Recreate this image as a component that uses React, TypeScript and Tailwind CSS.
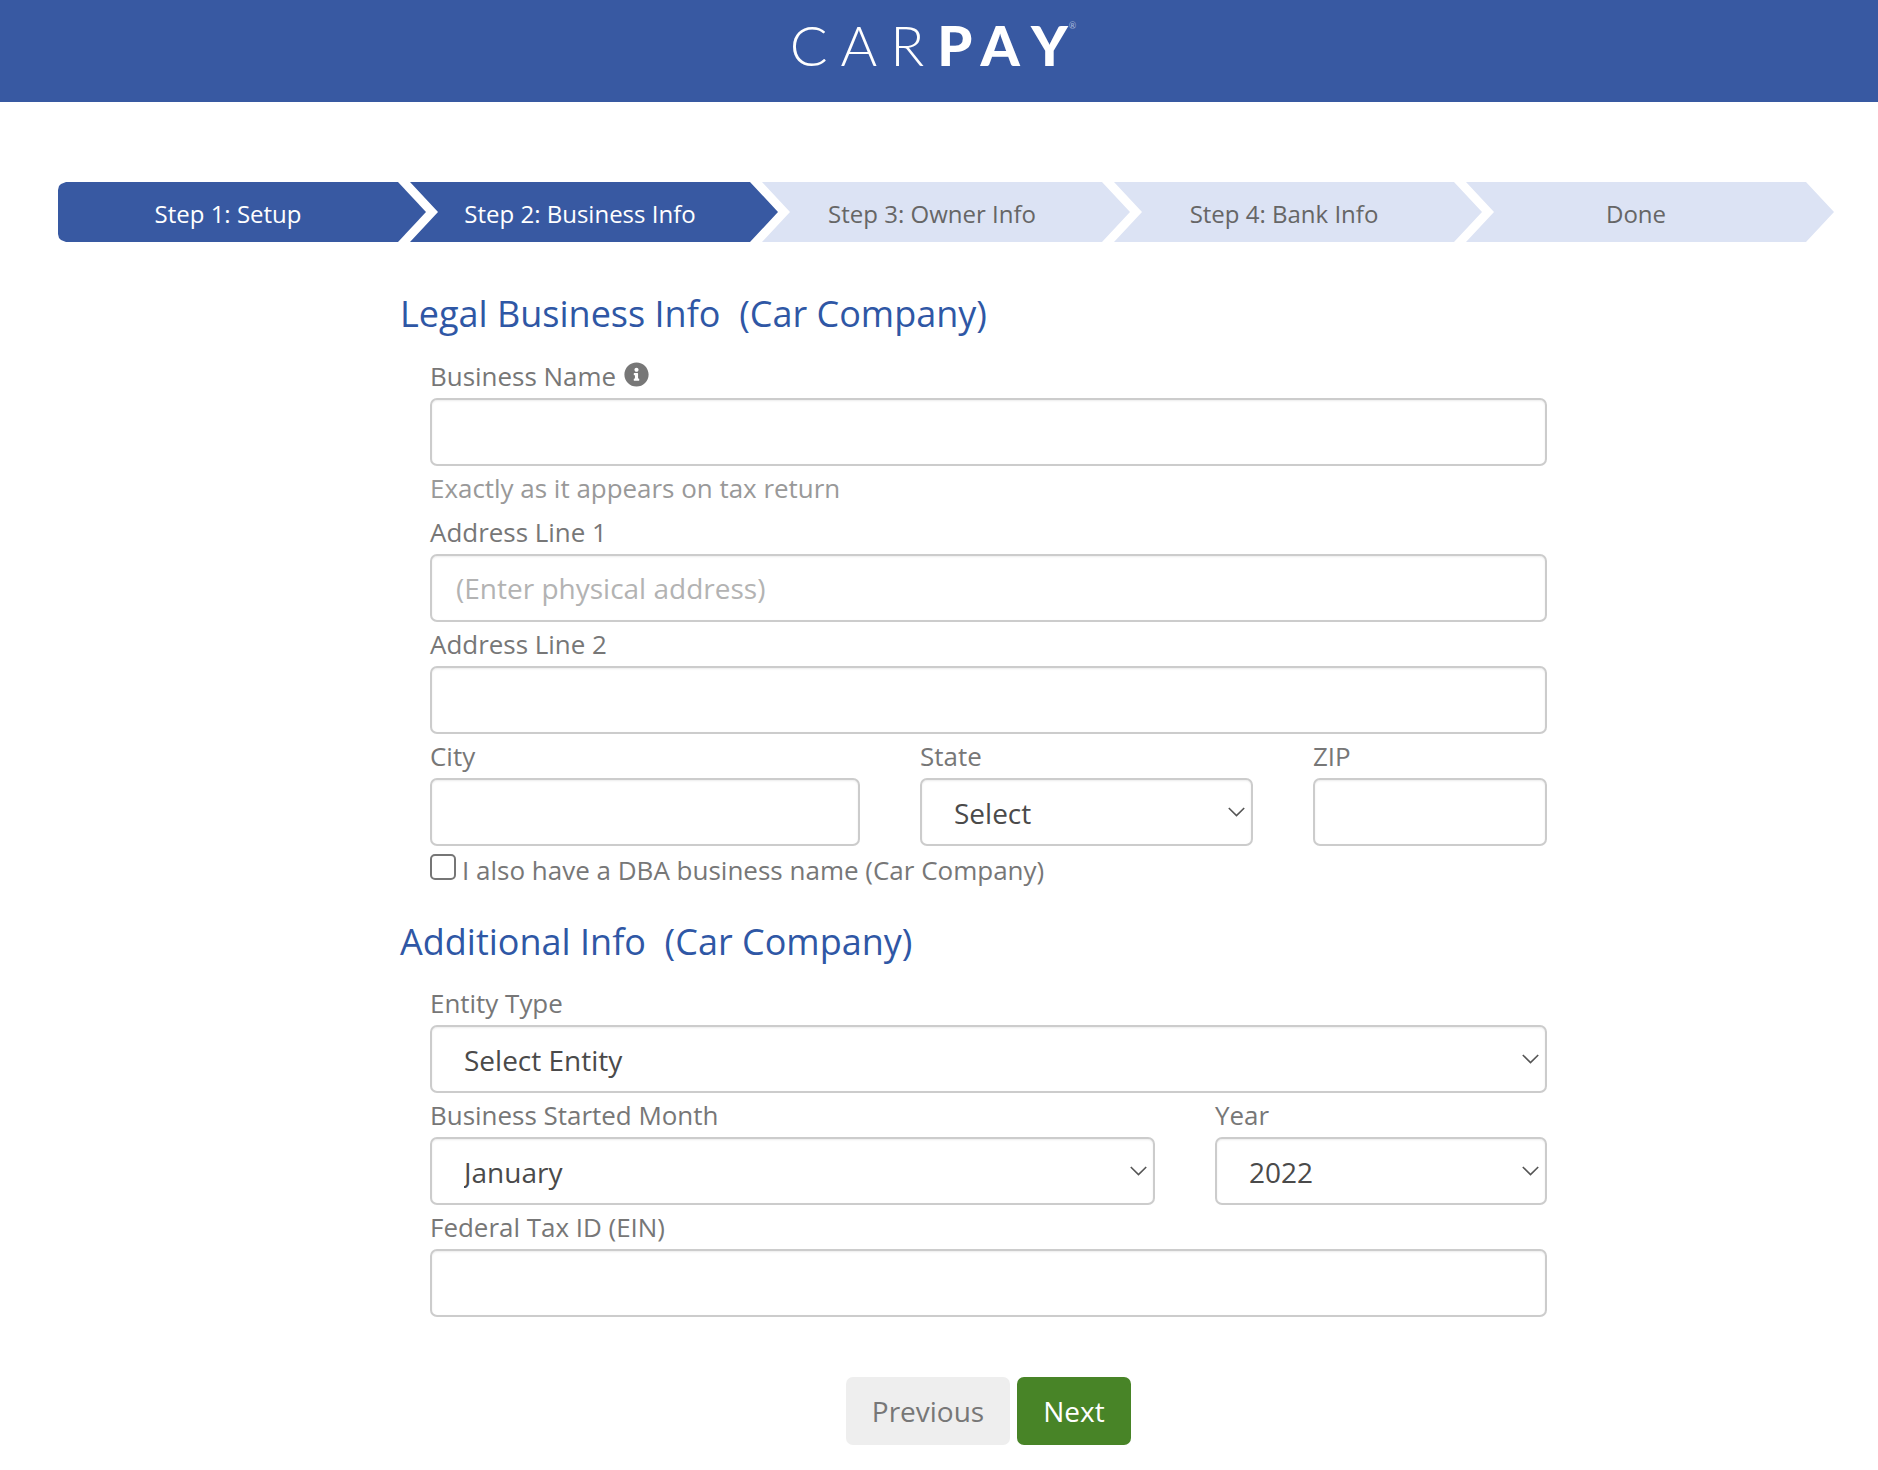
import React from "react";
import { FaInfoCircle } from "react-icons/fa";

const steps = [
  { label: "Step 1: Setup", on: true, first: true },
  { label: "Step 2: Business Info", on: true },
  { label: "Step 3: Owner Info" },
  { label: "Step 4: Bank Info" },
  { label: "Done" },
];

const inputCls =
  "h-[68px] w-full rounded-[7px] border-2 border-[#cccccc] bg-white px-[24px] text-[28px] text-[#4a4a4a] shadow-[inset_0_1px_2px_rgba(0,0,0,0.08)] outline-none placeholder:text-[#b3b3b3]";

function Label({ children }: { children: React.ReactNode }) {
  return <div className="flex h-[44px] items-center pt-[1px] text-[25.95px] text-[#777777]">{children}</div>;
}

function Field({ label, placeholder }: { label: React.ReactNode; placeholder?: string }) {
  return (
    <div>
      <Label>{label}</Label>
      <input type="text" placeholder={placeholder} className={inputCls} />
    </div>
  );
}

function Select({ label, value }: { label: string; value: string }) {
  return (
    <div>
      <Label>{label}</Label>
      <div className="relative">
        <select
          defaultValue={value}
          className="h-[68px] w-full appearance-none rounded-[7px] border-2 border-[#cccccc] bg-white pl-[32px] pr-[40px] pt-[2px] text-[28px] text-[#4a4a4a] shadow-[inset_0_1px_2px_rgba(0,0,0,0.08)] outline-none"
        >
          <option>{value}</option>
        </select>
        <svg
          className="pointer-events-none absolute right-[8px] top-[29px]"
          width="17"
          height="10"
          viewBox="0 0 17 10"
          fill="none"
          stroke="#555555"
          strokeWidth="1.6"
        >
          <path d="M0.8 1 L8.5 8.6 L16.2 1" />
        </svg>
      </div>
    </div>
  );
}

export default function App() {
  return (
    <div className="min-h-[1470px] bg-white font-['Open_Sans',sans-serif]">
      <header className="flex h-[102px] justify-center bg-[#3859a2] pr-[12px] pt-[13px] font-['Lato',sans-serif] text-white">
        <div className="flex h-[64px] items-center text-[56px] leading-none">
          <span className="font-light tracking-[13px]">CAR</span>
          <span className="font-black">
            <span className="tracking-[11px]">PA</span>Y
          </span>
          <span className="ml-[1px] -mt-[40px] text-[9px] text-[#a9b8da]">®</span>
        </div>
      </header>

      <nav className="mt-[80px] flex pl-[58px]">
        {steps.map((s, i) => (
          <div
            key={s.label}
            className={`flex h-[60px] w-[368px] items-center justify-center pr-[28px] pt-[4px] text-[24px] ${i === 0 ? "" : "-ml-[16px]"} ${
              s.on ? "bg-[#3859a2] text-white" : "bg-[#dce3f4] text-[#666666]"
            } ${
              s.first
                ? "[clip-path:polygon(8px_0,340px_0,368px_30px,340px_60px,8px_60px,3px_58px,1px_56px,0_52px,0_8px,1px_4px,3px_2px)]"
                : "[clip-path:polygon(0_0,340px_0,368px_30px,340px_60px,0_60px,28px_30px)]"
            }`}
          >
            <span>{s.label}</span>
          </div>
        ))}
      </nav>

      <main className="ml-[400px] mt-[47px] w-[1147px]">
        <h2 className="mb-[15px] flex h-[50px] items-center whitespace-pre text-[36px] text-[#2f57a5]">
          Legal Business Info  (Car Company)
        </h2>
        <div className="pl-[30px]">
          <Field
            label={
              <span className="flex items-center gap-[8px]">
                Business Name
                <FaInfoCircle className="-mt-[3px] text-[25px] text-[#777777]" />
              </span>
            }
          />
          <div className="flex h-[44px] items-center pt-[1px] text-[25.95px] text-[#999999]">
            Exactly as it appears on tax return
          </div>
          <Field label="Address Line 1" placeholder="(Enter physical address)" />
          <Field label="Address Line 2" />
          <div className="flex gap-[60px]">
            <div className="w-[430px]">
              <Field label="City" />
            </div>
            <div className="w-[333px]">
              <Select label="State" value="Select" />
            </div>
            <div className="w-[234px]">
              <Field label="ZIP" />
            </div>
          </div>
          <label className="mt-[3px] flex h-[44px] items-center pb-[1px] text-[26px] text-[#777777]">
            <input
              type="checkbox"
              className="-mt-[8px] mr-[6px] h-[26px] w-[26px] appearance-none rounded-[5px] border-2 border-[#767676] bg-white"
            />
            I also have a DBA business name (Car Company)
          </label>
        </div>

        <h2 className="mb-[14px] mt-[24px] flex h-[50px] items-center whitespace-pre text-[36px] text-[#2f57a5]">
          Additional Info  (Car Company)
        </h2>
        <div className="pl-[30px]">
          <Select label="Entity Type" value="Select Entity" />
          <div className="flex gap-[60px]">
            <div className="w-[725px]">
              <Select label="Business Started Month" value="January" />
            </div>
            <div className="w-[332px]">
              <Select label="Year" value="2022" />
            </div>
          </div>
          <Field label="Federal Tax ID (EIN)" />
          <div className="mt-[60px] flex justify-center gap-[7px]">
            <button className="h-[68px] w-[164px] rounded-[7px] bg-[#eeeeee] text-[28px] text-[#777777]">Previous</button>
            <button className="h-[68px] w-[114px] rounded-[7px] bg-[#488427] text-[28px] text-white">Next</button>
          </div>
        </div>
      </main>
    </div>
  );
}
